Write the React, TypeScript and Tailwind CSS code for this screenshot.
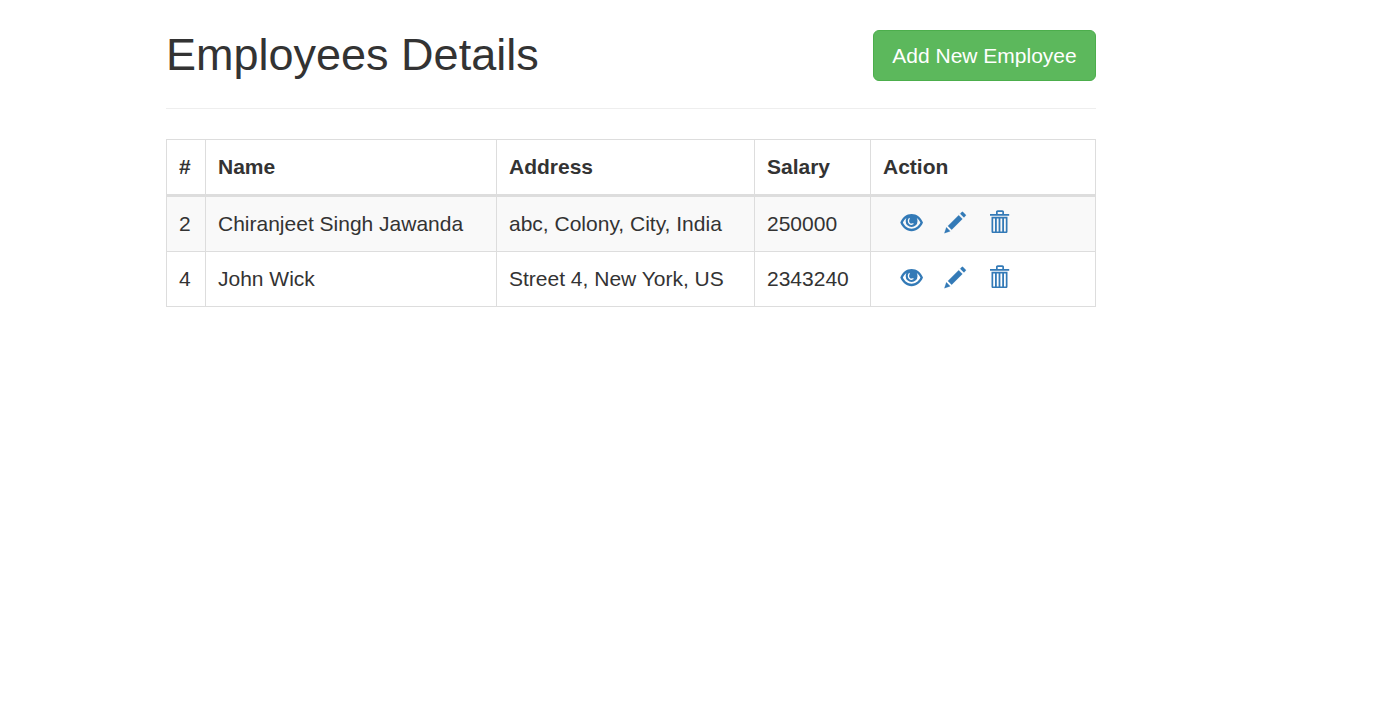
import type { ReactNode } from "react";

type Employee = { id: number; name: string; address: string; salary: string };

const employees: Employee[] = [
  { id: 2, name: "Chiranjeet Singh Jawanda", address: "abc, Colony, City, India", salary: "250000" },
  { id: 4, name: "John Wick", address: "Street 4, New York, US", salary: "2343240" },
];

function EyeIcon() {
  return (
    <svg width="24" height="24" viewBox="0 0 24 24" fill="currentColor" aria-hidden="true">
      <path
        fillRule="evenodd"
        d="M.3 12.600C2.400 7.300 6.500 4 11.600 4s9.200 3.300 11.400 8.600C20.800 17.900 16.700 21.200 11.600 21.200S2.400 17.900.3 12.600ZM2.900 12.600c1.700 3.900 5 6.200 8.700 6.200s7-2.300 8.800-6.200c-.9-2.100-2-3.500-3.600-4.600.5 1 .7 2 .7 3.200a5.900 5.900 0 0 1-11.800 0c0-1.200.2-2.200.7-3.200-1.500 1.100-2.700 2.500-3.500 4.600ZM9.200 7.800c-.9.800-1.400 1.900-1.400 3.100 0 2.300 1.600 4 3.700 4 .9 0 1.700-.3 2.300-.8l-.8-1c-.5.400-1 .5-1.500.5-1.500 0-2.400-1.200-2.400-2.600 0-.8.300-1.600.8-2.200Z"
      />
      <path d="M10.200 9.500h2.700v3.200h-1.700z" />
    </svg>
  );
}

function PencilIcon() {
  return (
    <svg width="24" height="24" viewBox="0 0 24 24" fill="currentColor" aria-hidden="true">
      <path
        transform="translate(.7 22.900) scale(.0175 -.0175)"
        stroke="currentColor"
        strokeWidth="12"
        d="M1011 1210q19 0 33-13l153-153q13-14 13-33t-13-33l-99-92-214 214 95 96q13 14 32 14zM1013 800l-615-614-214 214 614 614zM317 96l-333-112 110 335z"
      />
    </svg>
  );
}

function TrashIcon() {
  return (
    <svg width="24" height="24" viewBox="0 0 24 24" fill="currentColor" aria-hidden="true">
      <path
        fillRule="evenodd"
        d="M8 4V2c0-1 .7-1.700 1.700-1.700h4.600c1 0 1.700.7 1.700 1.700v2h5.200v1.700H2V4ZM9.700 4h4.600V2H9.700ZM3.500 6.800h16v14.700c0 .9-.6 1.600-1.500 1.600H5c-.9 0-1.500-.7-1.500-1.600ZM5.200 8.500v12.900h1.800V8.500ZM8.800 8.500v12.900h1.800V8.500ZM12.400 8.500v12.900h1.800V8.500ZM16 8.500v12.900h1.800V8.500Z"
      />
    </svg>
  );
}

function IconLink({ label, children }: { label: string; children: ReactNode }) {
  return (
    <a href="#" aria-label={label} className="block size-6">
      {children}
    </a>
  );
}

const headCell = "border-r border-b-3 border-[#ddd] p-3 text-left font-bold";
const bodyCell = "border-r border-b border-[#ddd] p-3";

export default function App() {
  return (
    <div className="min-h-screen bg-white font-['Liberation_Sans',Arial,sans-serif] text-[21px] leading-[30px] text-[#333]">
      <main className="ml-[166px] w-[930px] pt-[30px]">
        <header className="flex h-[79px] items-start justify-between border-b border-[#eee]">
          <h2 className="text-[45px] leading-[50px] font-normal">Employees Details</h2>
          <button className="h-[51px] w-[223px] rounded-md border border-[#4cae4c] bg-[#5cb85c] text-center whitespace-nowrap text-white">
            Add New Employee
          </button>
        </header>
        <table className="mt-[30px] w-full table-fixed border-separate border-spacing-0 border-t border-l border-[#ddd]">
          <colgroup>
            <col className="w-[39px]" />
            <col className="w-[291px]" />
            <col className="w-[258px]" />
            <col className="w-[116px]" />
            <col className="w-[225px]" />
          </colgroup>
          <thead>
            <tr>
              <th className={headCell}>#</th>
              <th className={headCell}>Name</th>
              <th className={headCell}>Address</th>
              <th className={headCell}>Salary</th>
              <th className={headCell}>Action</th>
            </tr>
          </thead>
          <tbody>
            {employees.map((e) => (
              <tr key={e.id} className="odd:bg-[#f9f9f9]">
                <td className={bodyCell}>{e.id}</td>
                <td className={bodyCell}>{e.name}</td>
                <td className={bodyCell}>{e.address}</td>
                <td className={bodyCell}>{e.salary}</td>
                <td className={bodyCell}>
                  <div className="flex h-[30px] gap-5 pt-px pl-[17px] text-[#337ab7]">
                    <IconLink label="View">
                      <EyeIcon />
                    </IconLink>
                    <IconLink label="Edit">
                      <PencilIcon />
                    </IconLink>
                    <IconLink label="Delete">
                      <TrashIcon />
                    </IconLink>
                  </div>
                </td>
              </tr>
            ))}
          </tbody>
        </table>
      </main>
    </div>
  );
}
